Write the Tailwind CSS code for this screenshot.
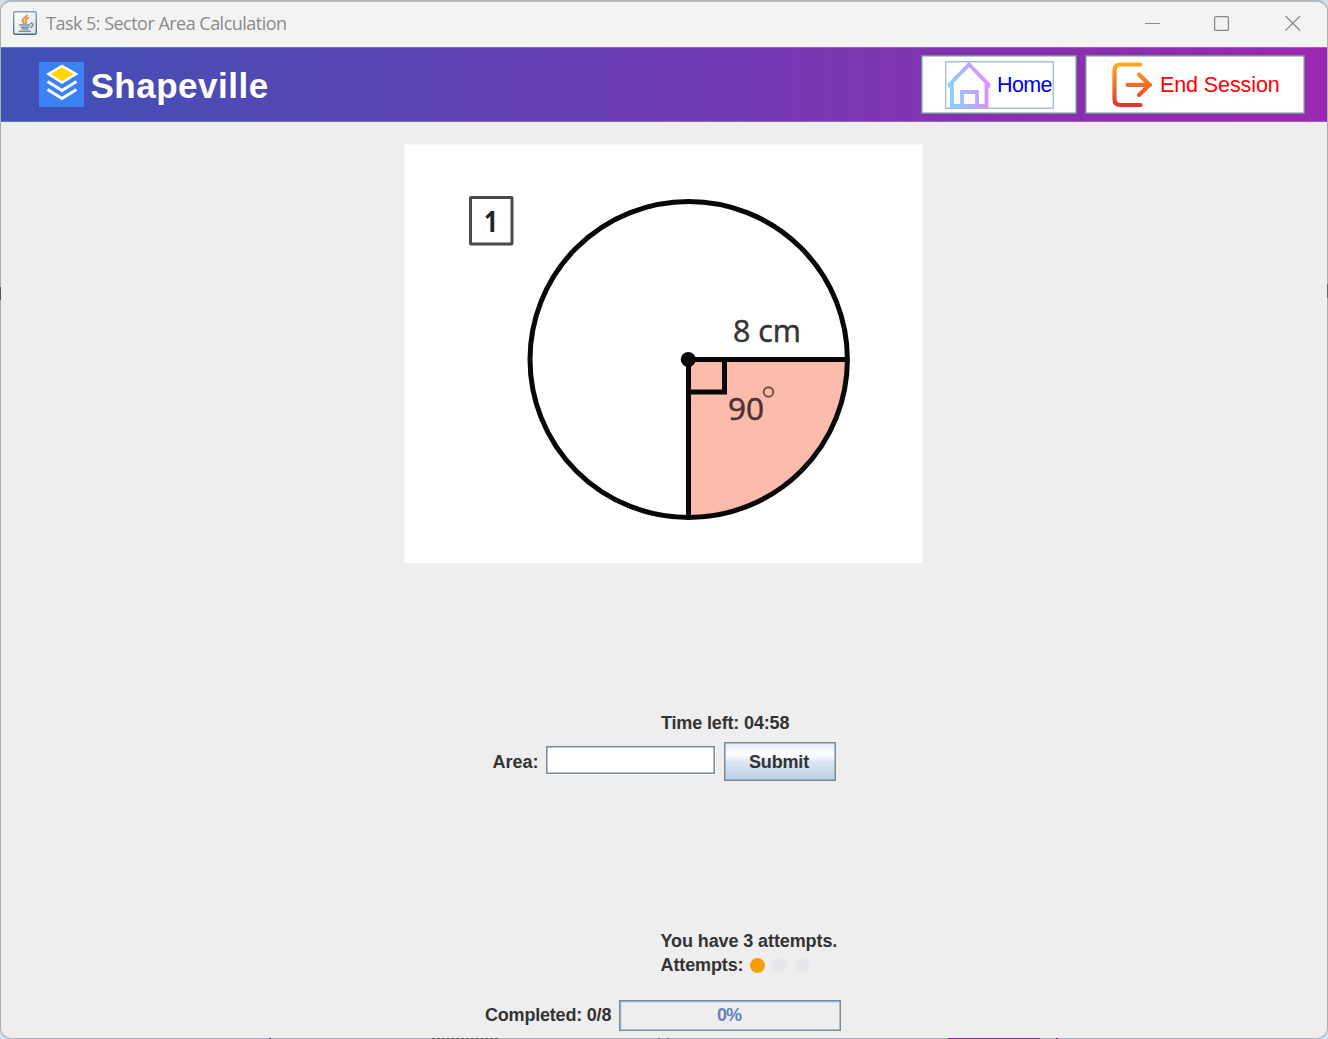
<!DOCTYPE html>
<html lang="en">
<head>
<meta charset="utf-8">
<title>Task 5: Sector Area Calculation</title>
<script src="https://cdn.jsdelivr.net/npm/@tailwindcss/browser@4"></script>
</head>
<body class="relative bg-[#d7e0e6] w-[1328px] h-[1039px] overflow-hidden">
<div class="w-[1328px] h-[1039px] flex flex-col bg-[#eeeeee] rounded-[11px] overflow-hidden border border-t-2 border-[#a9afb4] border-t-[#b4b9bd] font-['Liberation_Sans',sans-serif] text-[#333333]">
  <!-- Title bar -->
  <div class="h-[45px] shrink-0 bg-[#f3f3f3] flex items-center pl-[12px] pr-[26px] pb-[3px]">
    <svg class="size-6 shrink-0" viewBox="0 0 24 24" fill="none">
      <defs><linearGradient id="jb" x1="0" y1="0" x2="0" y2="1"><stop stop-color="#8ba0ae"/><stop offset="1" stop-color="#49677e"/></linearGradient><linearGradient id="jf" x1="0" y1="0" x2="1" y2="1"><stop stop-color="#fff"/><stop offset="1" stop-color="#dde3e7"/></linearGradient></defs>
      <rect x=".7" y=".7" width="22.6" height="22.6" rx="1.5" fill="url(#jf)" stroke="url(#jb)" stroke-width="1.4"/>
      <path d="M14 3.500C14.500 6 9 7.500 9.500 9.500C9.800 11 11 11.500 11 13M16 6.500C13 7.500 12 9 13 10.500C13.800 11.500 12.800 12.500 12.300 13" stroke="#ee8a3a" stroke-width="1.800"/>
      <path d="M6 14H17M7.500 16.300H16M8.500 18H15.500M17 12.500C21 11.500 20.500 15.500 17 16.500M5.500 20.300H18" stroke="#7990a3" stroke-width="1.600"/>
    </svg>
    <span class="ml-[9px] font-['Open_Sans',sans-serif] text-[18px] leading-6 tracking-[-0.52px] text-[#8b8b8b] whitespace-nowrap">Task 5: Sector Area Calculation</span>
    <svg class="ml-auto w-[156px] h-4 shrink-0" viewBox="0 0 156 16" fill="none" stroke="#888888">
      <path d="M0 8.500H15" stroke-width="1"/><rect x="69.600" y="1.600" width="13.800" height="13.800" rx="1.500" stroke-width="1.300"/><path d="M140.500 1L155 15.500M155 1L140.500 15.500" stroke-width="1.200"/>
    </svg>
  </div>
  <!-- Header -->
  <div class="h-[75px] shrink-0 border-y border-y-white/20 bg-[linear-gradient(90deg,#3f51b5,#9c27b0)] bg-origin-border flex items-center pl-[37.500px] pr-[22px]">
    <svg class="size-[45px] shrink-0" viewBox="0 0 45 45" fill="none" stroke="#fff" stroke-width="3">
      <rect width="45" height="45" fill="#3b82f6" stroke="none"/>
      <path d="M9.500 12L23 4L37 12L23 20.500Z" fill="#ffd600" stroke-width="2.500"/>
      <path d="M8.500 19.500L23 28.500L37.500 19.500M8.500 27.500L23 36.500L37.500 27.500"/>
    </svg>
    <span class="ml-[7px] text-[35px] leading-[40px] font-bold text-white tracking-[0.5px] mt-[3px]">Shapeville</span>
    <div class="ml-auto flex gap-2 shrink-0">
      <button class="w-[156px] h-[59px] bg-white shadow-[inset_0_0_0_1.500px_#7a8a99] flex items-center justify-center">
        <span class="w-[109px] h-[48px] shadow-[inset_0_0_0_1.400px_#a9bfd3] pl-px flex items-center whitespace-nowrap">
          <svg class="w-[46px] h-[46px] shrink-0" viewBox="0 0 46 46" fill="none">
            <defs><linearGradient id="hg" gradientUnits="userSpaceOnUse" x1="2" y1="30" x2="44" y2="22"><stop stop-color="#82d3fd"/><stop offset="1" stop-color="#e58aff"/></linearGradient></defs>
            <path d="M2.500 23.500L23 2.500L43.500 23.500M6 21.500V44H40.500V21.500M2 23.700H6M40.500 23.700H44M16 44V30H31V44" stroke="url(#hg)" stroke-width="3.800" stroke-linejoin="miter" stroke-linecap="butt"/>
            <path d="M6 44H40.500" stroke="url(#hg)" stroke-width="3.600" stroke-linecap="round"/>
          </svg>
          <span class="ml-[5.500px] text-[21.500px] leading-6 text-[#0000ee] tracking-[-0.65px]">Home</span>
        </span>
      </button>
      <button class="w-[220px] h-[59px] bg-white shadow-[inset_0_0_0_1.500px_#7a8a99] flex items-center pl-[26px] whitespace-nowrap">
        <svg class="w-[45px] h-[47px] shrink-0" viewBox="0 0 45 47" fill="none">
          <defs><linearGradient id="eg" gradientUnits="userSpaceOnUse" x1="0" y1="2" x2="0" y2="45"><stop stop-color="#ffaa22"/><stop offset="1" stop-color="#e03530"/></linearGradient></defs>
          <path d="M29.500 3.500H9.500Q3.500 3.500 3.500 9.500V38Q3.500 44 9.500 44H29.500M16.500 23.800H39M28 13.500L38.500 23.800L28 34" stroke="url(#eg)" stroke-width="4.200" stroke-linejoin="round" stroke-linecap="round"/>
        </svg>
        <span class="ml-[4px] text-[21.500px] leading-6 text-[#ff0000] tracking-[-0.1px]">End Session</span>
      </button>
    </div>
  </div>
  <!-- Exercise -->
  <svg class="mt-[22px] ml-[403px] w-[519px] h-[419px] shrink-0" viewBox="404 144 519 419" fill="none" stroke="#080808" font-family="'Open Sans',sans-serif">
    <rect x="404.500" y="144.500" width="518" height="418.500" fill="#fff" stroke="none"/>
    <path d="M688.500 359.500H847.500A159 158 0 0 1 688.500 517.500Z" fill="#fabbaa" stroke="none"/>
    <ellipse cx="688.700" cy="359.500" rx="158.700" ry="158" stroke-width="5"/>
    <path d="M848 359.500H688.500V517M688.500 392H724.500V360" stroke-width="5"/>
    <circle cx="688.300" cy="359.500" r="7.500" fill="#080808" stroke="none"/>
    <rect x="470.500" y="197.500" width="41.500" height="46.500" rx=".5" stroke="#4a4a4a" stroke-width="3"/>
    <text x="491" y="232" text-anchor="middle" font-family="'Noto Sans',sans-serif" font-weight="700" font-size="28" fill="#222" stroke="none" textLength="14" lengthAdjust="spacingAndGlyphs">1</text>
    <text x="733" y="342" font-size="31" fill="#333" stroke="#333" stroke-width=".5" textLength="68" lengthAdjust="spacingAndGlyphs">8 cm</text>
    <text x="728" y="420" font-size="31" fill="#49332e" stroke="#49332e" stroke-width=".5" textLength="36" lengthAdjust="spacingAndGlyphs">90</text>
    <circle cx="768.500" cy="392" r="4.800" stroke="#704f47" stroke-width="1.900"/>
  </svg>
  <div class="mt-[148px] ml-[660px] h-6 text-[18px] leading-6 font-bold tracking-[-0.15px]">Time left: 04:58</div>
  <div class="mt-[6px] ml-[491.500px] h-[40px] flex items-center text-[18px] font-bold">
    <span class="w-[53.500px] pt-[2px]">Area:</span>
    <input aria-label="Area" class="-mt-[2px] w-[169px] h-[28px] bg-white shadow-[inset_0_0_0_1.500px_#7a8a99,1px_1px_0_#ffffff]">
    <button class="ml-[9px] w-[112px] h-[39px] shadow-[inset_0_0_0_1.500px_#7a8a99] bg-[linear-gradient(180deg,#dde8f3_0%,#ffffff_32%,#dce6f1_52%,#b8cfe5_100%)]"><span class="inline-block -ml-[2px] pt-[2px] tracking-[-0.15px]">Submit</span></button>
  </div>
  <div class="mt-[148px] ml-[659.500px] text-[18px] leading-6 font-bold">
    <div class="tracking-[-0.1px]">You have 3 attempts.</div>
    <div class="flex items-center"><span class="w-[89px] tracking-[-0.12px]">Attempts:</span>
      <span class="flex gap-[7.500px]"><i class="size-[15px] rounded-full bg-[#f59e0b]"></i><i class="size-[15px] rounded-full bg-[#e5e7eb]"></i><i class="size-[15px] rounded-full bg-[#e5e7eb]"></i></span>
    </div>
  </div>
  <div class="mt-[22.500px] ml-[484px] h-[31px] flex items-center text-[18px] font-bold">
    <span class="w-[134px] whitespace-nowrap pt-px tracking-[-0.2px]">Completed: 0/8</span>
    <div class="w-[222px] h-[31px] shadow-[inset_0_0_0_1.500px_#7a8a99,inset_2.500px_2.500px_0_#b8cfe5] flex items-center justify-center text-[#6382bf]"><span class="-ml-0.5 pt-px tracking-[-0.9px]">0%</span></div>
  </div>
</div>
<!-- Slivers of the windows behind, along the edges -->
<div class="absolute left-0 top-[287px] w-px h-[13px] bg-[#555]"></div>
<div class="absolute right-0 top-[284px] w-px h-[14px] bg-[#666]"></div>
<div class="absolute bottom-0 left-[948px] w-[92px] h-px bg-[#7b2f8e]"></div>
<div class="absolute bottom-0 left-[432px] w-[66px] border-b border-dashed border-[#555]"></div>
<div class="absolute bottom-0 left-[269px] w-[2px] h-px bg-[#5b2a66]"></div>
<div class="absolute bottom-0 left-[658px] w-[11px] h-px border-x-2 border-[#875b91]"></div>
<div class="absolute bottom-0 left-[1056px] w-[2px] h-px bg-[#6b2a55]"></div>
</body>
</html>
